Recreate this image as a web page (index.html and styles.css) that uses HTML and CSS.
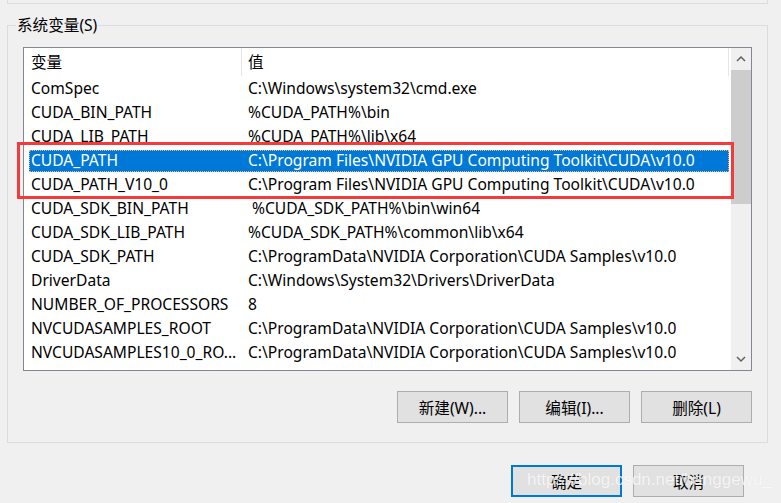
FILE: index.html
```html
<!DOCTYPE html>
<html lang="zh-CN">
<head>
    <meta charset="UTF-8">
    <title>环境变量</title>
    <link rel="stylesheet" href="styles.css">
</head>
<body>
    <div class="prev-group"></div>

    <fieldset class="group">
        <legend>系统变量(S)</legend>

        <div class="listview">
            <div class="list">
                <div class="header">
                    <span class="name">变量</span>
                    <span class="value">值</span>
                </div>
                <div class="rows">
                    <div class="row"><span class="name">ComSpec</span><span class="value">C:\Windows\system32\cmd.exe</span></div>
                    <div class="row"><span class="name">CUDA_BIN_PATH</span><span class="value">%CUDA_PATH%\bin</span></div>
                    <div class="row"><span class="name">CUDA_LIB_PATH</span><span class="value">%CUDA_PATH%\lib\x64</span></div>
                    <div class="row selected"><span class="name">CUDA_PATH</span><span class="value">C:\Program Files\NVIDIA GPU Computing Toolkit\CUDA\v10.0</span></div>
                    <div class="row"><span class="name">CUDA_PATH_V10_0</span><span class="value">C:\Program Files\NVIDIA GPU Computing Toolkit\CUDA\v10.0</span></div>
                    <div class="row"><span class="name">CUDA_SDK_BIN_PATH</span><span class="value">&nbsp;%CUDA_SDK_PATH%\bin\win64</span></div>
                    <div class="row"><span class="name">CUDA_SDK_LIB_PATH</span><span class="value">%CUDA_SDK_PATH%\common\lib\x64</span></div>
                    <div class="row"><span class="name">CUDA_SDK_PATH</span><span class="value">C:\ProgramData\NVIDIA Corporation\CUDA Samples\v10.0</span></div>
                    <div class="row"><span class="name">DriverData</span><span class="value">C:\Windows\System32\Drivers\DriverData</span></div>
                    <div class="row"><span class="name">NUMBER_OF_PROCESSORS</span><span class="value">8</span></div>
                    <div class="row"><span class="name">NVCUDASAMPLES_ROOT</span><span class="value">C:\ProgramData\NVIDIA Corporation\CUDA Samples\v10.0</span></div>
                    <div class="row"><span class="name">NVCUDASAMPLES10_0_RO...</span><span class="value">C:\ProgramData\NVIDIA Corporation\CUDA Samples\v10.0</span></div>
                    <div class="row"><span class="name">OS</span><span class="value">Windows_NT</span></div>
                </div>
            </div>

            <div class="scrollbar">
                <div class="sb-btn">
                    <svg width="10" height="8" viewBox="0 0 10 8"><polyline points="1,6 5,2 9,6" fill="none" stroke="#606060" stroke-width="1.5"/></svg>
                </div>
                <div class="sb-track"><div class="sb-thumb"></div></div>
                <div class="sb-btn">
                    <svg width="10" height="8" viewBox="0 0 10 8"><polyline points="1,2 5,6 9,2" fill="none" stroke="#606060" stroke-width="1.5"/></svg>
                </div>
            </div>

            <!-- annotation box around the CUDA_PATH rows -->
            <div class="mark"></div>
        </div>

        <div class="group-buttons">
            <button class="btn">新建(W)...</button>
            <button class="btn">编辑(I)...</button>
            <button class="btn">删除(L)</button>
        </div>
    </fieldset>

    <div class="dialog-buttons">
        <button class="btn default">确定</button>
        <button class="btn">取消</button>
    </div>

    <div class="watermark">https://blog.csdn.net/hanggewu_</div>
</body>
</html>
```

FILE: styles.css
```css
body, html {
    margin: 0;
    padding: 0;
    background-color: #f0f0f0;
    color: #000;
    font-family: "Noto Sans", "Noto Sans CJK SC", sans-serif;
    font-size: 15.6px;
    overflow: hidden;
}

body {
    position: relative;
    height: 503px;
}

.prev-group {
    height: 3px;
    margin: 0 13px 0 7px;
    border: 1px solid #dcdcdc;
    border-top: none;
}

.group {
    margin: 11px 13px 0 7px;
    padding: 12px 15px 19px 15px;
    border: 1px solid #dcdcdc;
    min-width: 0;
}

.group legend {
    margin-left: -7px;
    padding: 0 1px;
    line-height: 20px;
}

.listview {
    position: relative;
    display: flex;
    height: 322px;
    border: 1px solid #828790;
    background-color: #fff;
}

.list {
    flex: 1;
    overflow: hidden;
}

.header {
    display: flex;
    height: 28px;
    line-height: 28px;
}

.header .name {
    box-sizing: border-box;
    width: 218px;
    padding-left: 7px;
    border-right: 1px solid #e5e5e5;
}

.header .value {
    box-sizing: border-box;
    width: 487px;
    padding-left: 6px;
    border-right: 1px solid #e5e5e5;
}

.row {
    display: flex;
    height: 24px;
    line-height: 24px;
    margin-left: 5px;
    width: 700px;
    white-space: nowrap;
}

.row .name {
    box-sizing: border-box;
    width: 213px;
    padding-left: 2px;
    overflow: hidden;
}

.row .value {
    padding-left: 6px;
    overflow: hidden;
}

.row.selected {
    box-sizing: border-box;
    height: 22px;
    line-height: 20px;
    margin-top: 2px;
    background-color: #0078d7;
    color: #fff;
    outline: 1px dotted #e8b878;
    outline-offset: -1px;
}

.scrollbar {
    width: 20px;
    display: flex;
    flex-direction: column;
    background-color: #f0f0f0;
    border-left: 1px solid #fff;
}

.sb-btn {
    height: 22px;
    display: flex;
    align-items: center;
    justify-content: center;
}

.sb-track {
    flex: 1;
}

.sb-thumb {
    height: 134px;
    background-color: #cdcdcd;
}

.mark {
    position: absolute;
    left: -7px;
    top: 94px;
    width: 711px;
    height: 51px;
    border: 3px solid #f53a3a;
}

.group-buttons {
    display: flex;
    justify-content: flex-end;
    gap: 11px;
    margin-top: 20px;
}

.btn {
    box-sizing: border-box;
    width: 111px;
    height: 32px;
    margin: 0;
    padding: 0;
    background-color: #e1e1e1;
    border: 1px solid #adadad;
    font-family: inherit;
    font-size: 15.6px;
    color: #000;
}

.btn.default {
    border: 2px solid #0078d7;
}

.dialog-buttons {
    display: flex;
    justify-content: flex-end;
    gap: 11px;
    margin-top: 22px;
    padding-right: 37px;
}

.watermark {
    position: absolute;
    left: 527px;
    top: 470px;
    font-family: "Liberation Sans", sans-serif;
    font-size: 17px;
    color: rgba(255, 255, 255, 0.8);
    text-shadow: 0 0 1px rgba(0, 0, 0, 0.08);
    white-space: nowrap;
}
```
